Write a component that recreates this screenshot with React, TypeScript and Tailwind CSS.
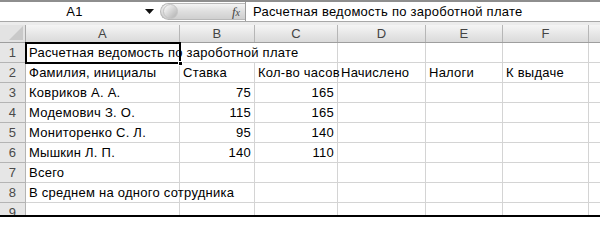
import React from "react";

const cols = [
  { key: "A", w: "w-[154px]" },
  { key: "B", w: "w-[75px]" },
  { key: "C", w: "w-[83px]" },
  { key: "D", w: "w-[88px]" },
  { key: "E", w: "w-[77px]" },
  { key: "F", w: "w-[86px]" },
  { key: "", w: "w-[40px]" },
];

type Row = { a?: string; b?: string; c?: string; d?: string; e?: string; f?: string };

const rows: Row[] = [
  { a: "Расчетная ведомость по зароботной плате" },
  { a: "Фамилия, инициалы", b: "Ставка", c: "Кол-во часов", d: "Начислено", e: "Налоги", f: "К выдаче" },
  { a: "Ковриков А. А.", b: "75", c: "165" },
  { a: "Модемович З. О.", b: "115", c: "165" },
  { a: "Мониторенко С. Л.", b: "95", c: "140" },
  { a: "Мышкин Л. П.", b: "140", c: "110" },
  { a: "Всего" },
  { a: "В среднем на одного сотрудника" },
  {},
];

const isNum = (v?: string) => !!v && /^\d+$/.test(v);

const Cell = ({ value, w, noRight }: { value?: string; w: string; noRight?: boolean }) => (
  <div
    className={`${w} h-[20px] shrink-0 border-b border-[#d4d4d4] ${noRight ? "" : "border-r"} flex items-center px-[3px] whitespace-nowrap ${
      isNum(value) ? "justify-end" : "justify-start"
    }`}
  >
    {value}
  </div>
);

const App = () => {
  return (
    <div className="w-[600px] h-[218px] bg-white overflow-hidden font-['Liberation_Sans',Arial,sans-serif] text-[13px] tracking-[0.25px] text-black">
      <div className="h-[2px] bg-[#8e8e8e]" />

      {/* formula bar */}
      <div className="h-[20px] flex items-stretch bg-white border-b border-[#a8a8a8]">
        <div className="w-[160px] shrink-0 flex items-center">
          <div className="flex-1 text-center pl-[4px]">A1</div>
          <svg width="9" height="6" viewBox="0 0 9 6" className="mr-[6px]">
            <path d="M0 0 H9 L4.5 5 Z" fill="#111" />
          </svg>
        </div>
        <div className="w-[85px] shrink-0 my-[1px] rounded-l-full bg-gradient-to-b from-[#f4f4f4] via-[#dedede] to-[#cfcfcf] border border-[#b8b8b8] border-r-0 flex items-center justify-between pl-[2px] pr-[5px]">
          <div className="w-[15px] h-[15px] rounded-full bg-gradient-to-br from-[#ffffff] via-[#d6d6d6] to-[#b0b0b0] border border-[#c4c4c4]" />
          <span className="font-['Liberation_Serif',serif] italic text-[13px] text-[#444] tracking-normal">
            f<span className="text-[10px]">x</span>
          </span>
        </div>
        <div className="w-px bg-[#9c9c9c]" />
        <div className="flex items-center pl-[7px] whitespace-nowrap">Расчетная ведомость по зароботной плате</div>
      </div>

      <div className="h-[3px] bg-[#ececec]" />

      {/* sheet */}
      <div className="h-[190px] overflow-hidden">
        <div className="flex h-[18px] border-b border-[#9e9e9e] text-[#444]">
          <div className="w-[26px] shrink-0 bg-[#e3e3e3] border-r border-[#a8a8a8] flex items-end justify-end">
            <svg width="14" height="14" viewBox="0 0 14 14" className="mr-[2px] mb-[2px]">
              <path d="M14 0 V14 H0 Z" fill="#c9c9c9" />
            </svg>
          </div>
          {cols.map((c, i) => (
            <div
              key={i}
              className={`${c.w} shrink-0 bg-gradient-to-b from-[#f5f5f5] to-[#dadada] border-r border-[#b6b6b6] flex items-center justify-center`}
            >
              {c.key}
            </div>
          ))}
        </div>

        {rows.map((r, i) => (
          <div key={i} className="flex">
            <div className="w-[26px] h-[20px] shrink-0 bg-[#e6e6e6] border-r border-b border-[#b4b4b4] text-[#4a4a4a] flex items-center justify-center">
              {i + 1}
            </div>
            {i === 0 ? (
              <>
                <div className="w-[154px] h-[20px] shrink-0 relative z-10 border-b border-[#d4d4d4] flex items-center px-[3px] whitespace-nowrap">
                  {r.a}
                  <div className="absolute -left-[1px] -top-[1px] -right-[1px] -bottom-[2px] border-2 border-black" />
                  <div className="absolute -right-[3px] -bottom-[4px] w-[5px] h-[5px] bg-black border border-white" />
                </div>
                <Cell w="w-[75px]" noRight />
                <Cell w="w-[83px]" />
              </>
            ) : (
              <>
                <Cell value={r.a} w="w-[154px]" />
                <Cell value={r.b} w="w-[75px]" />
                <Cell value={r.c} w="w-[83px]" />
              </>
            )}
            <Cell value={r.d} w="w-[88px]" />
            <Cell value={r.e} w="w-[77px]" />
            <Cell value={r.f} w="w-[86px]" />
            <Cell w="w-[40px]" />
          </div>
        ))}
      </div>

      <div className="h-[2px] bg-black" />
    </div>
  );
};

export default App;
